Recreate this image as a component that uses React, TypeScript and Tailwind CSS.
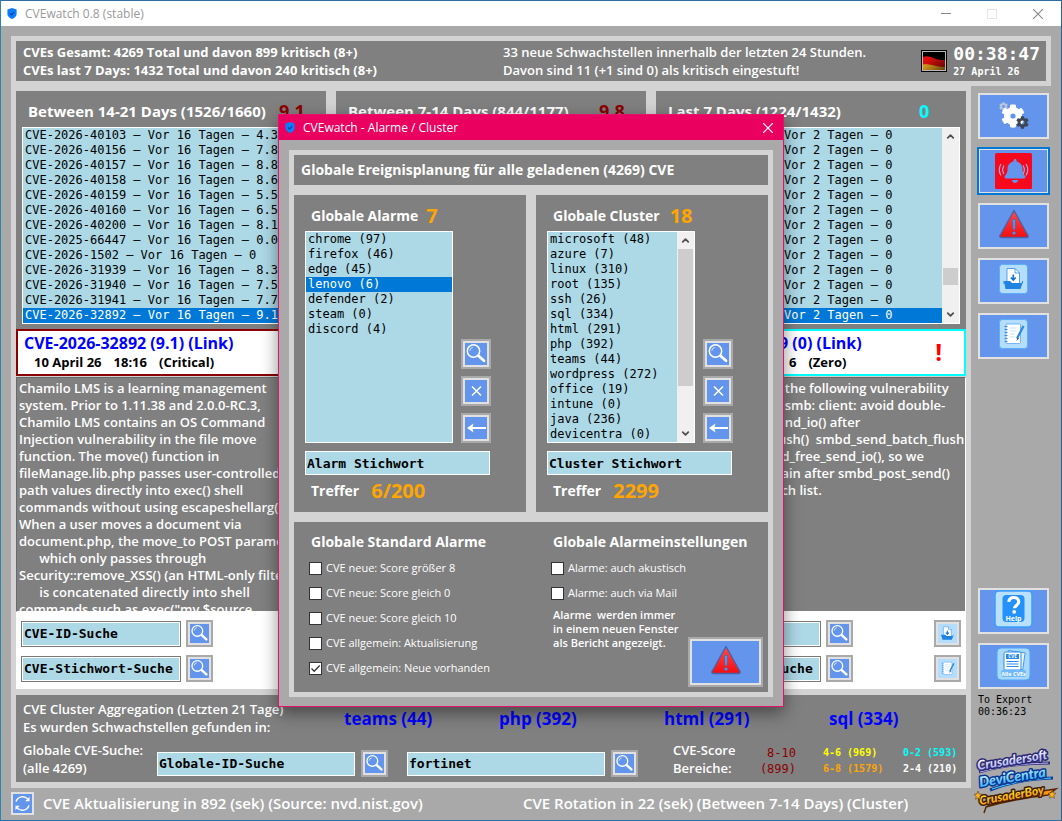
import React from "react";
import { FaBell, FaCog } from "react-icons/fa";
import { ChevronDown, ChevronUp } from "lucide-react";

const SANS = "font-['Open_Sans','Noto_Sans',sans-serif]";
const MONO = "font-['DejaVu_Sans_Mono','Liberation_Mono',monospace]";

/* ---------- icons ---------- */

function ShieldIcon() {
  return (
    <svg viewBox="0 0 10 11" className="h-[11px] w-2.5" aria-hidden="true">
      <path d="M5 0 9.6 1.4V6C9.6 8.4 7.4 10 5 11 2.6 10 .4 8.4.4 6V1.4Z" fill="#0a7cff" />
      <path d="m3 5.4 1.5 1.5L7.2 4" fill="none" stroke="#0b3c8c" strokeWidth="1.1" />
    </svg>
  );
}

function SearchIcon() {
  return (
    <svg viewBox="0 0 22 22" className="size-full" aria-hidden="true">
      <path d="m12.600 12 6.400 5.800" stroke="#fff" strokeWidth="2.800" strokeLinecap="round" />
      <circle cx="8.500" cy="8" r="6.200" fill="#6495ed" stroke="#fff" strokeWidth="1.500" />
      <path d="M4.800 7.800a3.800 3.800 0 0 1 3-3.400" stroke="#dbe7ff" strokeWidth="1" fill="none" />
    </svg>
  );
}

function CrossIcon() {
  return (
    <svg viewBox="0 0 22 22" className="size-full" aria-hidden="true">
      <path d="m7 6.5 9 9m0-9-9 9" stroke="#fff" strokeWidth="1.5" />
    </svg>
  );
}

function BackIcon() {
  return (
    <svg viewBox="0 0 22 22" className="size-full" aria-hidden="true">
      <path d="M5 11h16" stroke="#fff" strokeWidth="2" />
      <path d="M2 11 8.500 6.500 7.300 11l1.200 4.500Z" fill="#fff" />
    </svg>
  );
}

function RefreshIcon() {
  return (
    <svg viewBox="0 0 20 20" className="size-full" aria-hidden="true">
      <path d="M3.2 8A7.2 7.2 0 0 1 15.6 5.4M16.8 12A7.2 7.2 0 0 1 4.4 14.6" fill="none" stroke="#fff" strokeWidth="1.5" />
      <path d="M17.4 3v4.6h-4.6ZM2.6 17v-4.6h4.6Z" fill="#fff" />
    </svg>
  );
}

function GearsIcon() {
  return (
    <svg viewBox="0 0 30 28" className="h-7 w-[30px]" aria-hidden="true">
      <FaCog x="0" y="0" size={9} color="#b9c6d8" />
      <FaCog x="2" y="2" size={24} color="#ffffff" />
      <circle cx="14" cy="14" r="4.600" fill="#ffffff" />
      <circle cx="14" cy="14" r="2.6" fill="#6495ed" />
      <FaCog x="17" y="14" size={13} color="#3c4654" />
    </svg>
  );
}

function BellIcon() {
  return (
    <svg viewBox="0 0 37 36" className="h-9 w-[37px]" aria-hidden="true">
      <rect width="37" height="36" rx="1.5" fill="#f8081c" />
      <FaBell x="8" y="6" size={24} color="#6495ed" />
      <path d="M9 12.5a8 8 0 0 0 0 8.500M6 11a11 11 0 0 0 0 11.500M28 12.500a8 8 0 0 1 0 8.500M31 11a11 11 0 0 1 0 11.500" fill="none" stroke="#a3a9e0" strokeWidth="1.2" />
    </svg>
  );
}

function WarningIcon() {
  return (
    <svg viewBox="0 0 32 30" className="mb-1 h-[30px] w-8" aria-hidden="true">
      <defs>
        <linearGradient id="warn" x1="0" y1="0" x2="0" y2="1">
          <stop offset="0" stopColor="#ff4a48" />
          <stop offset="1" stopColor="#f40d12" />
        </linearGradient>
      </defs>
      <path d="M16 1.500 30 26.500Q30.500 28.500 28.500 28.500H3.500Q1.500 28.500 2 26.500Z" fill="url(#warn)" stroke="#4a62a8" strokeWidth="1.4" strokeLinejoin="round" />
      <path d="M14.500 10.500h3l-.5 10h-2Z" fill="#6495ed" stroke="#4a62a8" strokeWidth=".7" />
      <circle cx="16" cy="24" r="1.600" fill="#6495ed" stroke="#4a62a8" strokeWidth=".7" />
    </svg>
  );
}

function SaveArt() {
  return (
    <>
      <path d="M8 4.500h8l4.500 4.500v11H8Z" fill="#fff" stroke="#2f8de4" strokeWidth=".8" />
      <path d="M16 4.500V9h4.500" fill="none" stroke="#2f8de4" strokeWidth=".8" />
      <path d="M14.300 10.500v5m-2.500-2 2.500 2.500 2.500-2.500" fill="none" stroke="#1673d1" strokeWidth="1.700" />
      <path d="M5 17h6l2 2h10.500l-2 6H6.500Z" fill="#1f83e2" />
      <path d="M5 17v3m18.500-3v2" stroke="#1f83e2" strokeWidth="1" />
    </>
  );
}

function NoteArt() {
  return (
    <>
      <rect x="7" y="5" width="14.500" height="19.500" rx="1" fill="#fff" stroke="#57a8ee" strokeWidth=".8" />
      <path d="M5.500 7.500h3m-3 3h3m-3 3h3m-3 3h3m-3 3h3m-3 3h3" stroke="#3a8fe0" strokeWidth="1" />
      <path d="M10.500 9h7m-7 3h7m-7 3h5m-5 3h5" stroke="#b9dcfa" strokeWidth=".8" />
      <path d="m24.500 7-6.500 12.500" stroke="#2d86de" strokeWidth="2.200" />
      <path d="m18.600 18.500-1.300 3.500 2.700-2.400" fill="#174f92" />
    </>
  );
}

function Tile({ children, framed }: { children: React.ReactNode; framed?: boolean }) {
  return (
    <svg viewBox="0 0 29 30" className={framed ? "mb-1 h-[30px] w-[29px]" : "size-full bg-[#b5ddff]"} aria-hidden="true">
      <rect x=".5" y=".5" width="28" height="29" rx={framed ? 3 : 0} fill="#b5ddff" stroke={framed ? "#5aaefc" : "#b5ddff"} />
      {children}
    </svg>
  );
}

function HelpIcon() {
  return (
    <svg viewBox="0 0 39 38" className="mb-1 h-[38px] w-[39px]" aria-hidden="true">
      <rect x="1" y="1" width="37" height="36" rx="4" fill="#b9e0ff" stroke="#3b9dfc" strokeWidth="1.500" />
      <rect x="8.500" y="5" width="22" height="27" rx="4" fill="#2592fb" />
      <path d="M14.800 11.800c.3-3 2.300-4.300 5-4.300 3 0 4.900 1.700 4.900 4.200 0 3.800-4.200 3.600-4.200 6.600" fill="none" stroke="#fff" strokeWidth="3.200" />
      <circle cx="20.200" cy="21.800" r="1.900" fill="#fff" />
      <text x="19.500" y="30.500" textAnchor="middle" fontSize="7" fontWeight="700" fill="#fff" fontFamily="Open Sans">Help</text>
    </svg>
  );
}

function AllCvesIcon() {
  return (
    <svg viewBox="0 0 35 34" className="mb-1 h-[34px] w-[35px]" aria-hidden="true">
      <rect x="1" y="1" width="33" height="32" rx="4" fill="#a9d8ff" stroke="#4aa5fa" />
      <path d="M11 4.500h17v17H11Z" fill="#e8f5ff" stroke="#2b8bea" strokeWidth=".8" transform="rotate(8 19 13)" />
      <rect x="8" y="5" width="17" height="18" rx="1.500" fill="#fff" stroke="#2b8bea" />
      <rect x="10" y="7" width="13" height="5" fill="#2b8bea" />
      <text x="16.500" y="11.300" textAnchor="middle" fontSize="4.500" fontWeight="700" fill="#fff" fontFamily="Open Sans">CVE</text>
      <path d="M10.500 14.500h12m-12 2.500h12m-12 2.500h12" stroke="#2b8bea" strokeWidth="1.100" />
      <rect x="5" y="23" width="25" height="7" rx="2" fill="#6fb9f6" />
      <text x="17.500" y="28.800" textAnchor="middle" fontSize="5.500" fontWeight="700" fill="#fff" fontFamily="Open Sans">Alle CVEs</text>
    </svg>
  );
}

function FlagIcon() {
  return (
    <svg viewBox="0 0 26 22" className="h-[22px] w-[26px]" aria-label="Deutsch">
      <defs>
        <linearGradient id="shade" x1="0" y1="0" x2="1" y2="1">
          <stop offset=".3" stopColor="#000" stopOpacity="0" />
          <stop offset="1" stopColor="#000" stopOpacity=".6" />
        </linearGradient>
      </defs>
      <rect width="26" height="22" fill="#000" />
      <rect x="1.500" y="1.500" width="23" height="19" fill="#000" stroke="#b9b9b9" />
      <path d="M2 7C9 4 14 11 24 10v8C16 19 10 14 2 15Z" fill="#e00d0d" />
      <path d="M2 14.500c8-1 13 3 22 2.500v3H2Z" fill="#eba81c" />
      <rect x="2" y="2" width="22" height="18" fill="url(#shade)" />
    </svg>
  );
}

function BrandLogo() {
  return (
    <svg viewBox="0 0 84 66" className="h-[66px] w-[84px] overflow-visible" role="img" aria-label="Crusadersoft DeviCentra CrusaderBoy">
      <defs>
        <linearGradient id="l1" x1="0" y1="0" x2="0" y2="1">
          <stop offset=".2" stopColor="#ffffff" />
          <stop offset="1" stopColor="#8f9be8" />
        </linearGradient>
        <linearGradient id="l2" x1="0" y1="0" x2="0" y2="1">
          <stop offset=".2" stopColor="#c9f6ff" />
          <stop offset="1" stopColor="#1ba5f2" />
        </linearGradient>
        <linearGradient id="l3" x1="0" y1="0" x2="0" y2="1">
          <stop offset=".2" stopColor="#ffe53a" />
          <stop offset="1" stopColor="#f58a07" />
        </linearGradient>
      </defs>
      <path d="M5 25Q34 16 76 16" stroke="#37307e" strokeWidth="3" fill="none" />
      <path d="M6 25Q34 17 74 16" stroke="#b8b4f0" strokeWidth="1" fill="none" />
      <path d="M16 43Q44 32 79 31" stroke="#0b3c9c" strokeWidth="3" fill="none" />
      <path d="M18 42Q44 33 77 31" stroke="#4cd0ff" strokeWidth="1" fill="none" />
      <path d="M12 60Q38 48 82 42l-8 6Q40 52 12 60l-2 6" stroke="#5a2500" strokeWidth="1.500" fill="#f79a0d" />
      <g fontFamily="Lato" fontStyle="italic" fontWeight="900" paintOrder="stroke" strokeLinejoin="round">
        <text x="4" y="23" fontSize="13" fill="url(#l1)" stroke="#2b2672" strokeWidth="3" transform="rotate(-9 4 23)">Crusadersoft</text>
        <text x="6" y="40" fontSize="14" fill="url(#l2)" stroke="#0a3594" strokeWidth="3" transform="rotate(-9 6 40)">DeviCentra</text>
        <text x="6" y="58" fontSize="12" fill="url(#l3)" stroke="#3f1c04" strokeWidth="3" transform="rotate(-10 6 58)">CrusaderBoy</text>
      </g>
      <path d="m4 44 1 3 3 .3-2.300 2 .8 3L4 50.700l-2.500 1.600.8-3-2.300-2 3-.3ZM78 43l1 3 3 .3-2.300 2 .8 3-2.500-1.600-2.500 1.600.8-3-2.300-2 3-.3Z" fill="#ffb51c" stroke="#5a2d00" strokeWidth=".5" />
    </svg>
  );
}

/* ---------- controls ---------- */

function SquareButton({ label, large, children }: { label: string; large?: boolean; children: React.ReactNode }) {
  return (
    <button
      type="button"
      aria-label={label}
      className={`shrink-0 border-2 border-[#a9a9a9] bg-[#e1e1e1] p-0.5 ${large ? "size-[30px]" : "size-[27px]"}`}
    >
      <span className="block size-full bg-[#6495ed]">{children}</span>
    </button>
  );
}

function SideButton({ label, active, children }: { label: string; active?: boolean; children: React.ReactNode }) {
  return (
    <button
      type="button"
      aria-label={label}
      className={`flex h-[46px] w-full items-center justify-center border-2 border-[#e1e1e1] bg-[#6495ed] ${active ? "outline-2 -outline-offset-1 outline-[#0078d7]" : ""}`}
    >
      {children}
    </button>
  );
}

function TextField({ label, value, className = "" }: { label: string; value: string; className?: string }) {
  return (
    <input
      type="text"
      aria-label={label}
      defaultValue={value}
      className={`h-6 min-w-0 border border-white bg-[#add8e6] px-px text-[13px] font-bold text-black outline-none ${MONO} ${className}`}
    />
  );
}

function ScrollBar({ thumb }: { thumb: string }) {
  return (
    <div className="flex w-[17px] shrink-0 flex-col items-center bg-[#f0f0f0] text-[#505050]">
      <span className="flex h-[17px] items-center"><ChevronUp size={11} strokeWidth={4} /></span>
      <div className="flex w-[15px] flex-1 flex-col"><div className={`bg-[#cdcdcd] ${thumb}`} /></div>
      <span className="flex h-[17px] items-center"><ChevronDown size={11} strokeWidth={4} /></span>
    </div>
  );
}

function ListBox({ label, items, selected, thumb, className = "", rowClass = "pl-0.5" }: {
  label: string; items: string[]; selected?: number; thumb?: string; className?: string; rowClass?: string;
}) {
  return (
    <div className={`flex overflow-hidden border border-white bg-[#add8e6] ${className}`}>
      <ul role="listbox" aria-label={label} className={`min-w-0 flex-1 overflow-hidden whitespace-pre text-xs leading-[15px] ${MONO}`}>
        {items.map((item, i) => (
          <li key={i} role="option" aria-selected={i === selected} className={`${rowClass} ${i === selected ? "bg-[#0078d7] text-white" : "text-black"}`}>
            {item}
          </li>
        ))}
      </ul>
      {thumb && <ScrollBar thumb={thumb} />}
    </div>
  );
}

function Check({ label, checked }: { label: string; checked?: boolean }) {
  return (
    <label className="flex h-[25px] items-center gap-1 text-[11px] text-white">
      <span className="grid size-[13px]">
        <input type="checkbox" defaultChecked={checked} className="peer col-start-1 row-start-1 size-[13px] appearance-none border border-[#333] bg-white" />
        <svg viewBox="0 0 13 13" className="pointer-events-none invisible col-start-1 row-start-1 size-[13px] peer-checked:visible" aria-hidden="true">
          <path d="m2.500 6.500 2.700 2.800L10.700 3.500" fill="none" stroke="#333" strokeWidth="1.300" />
        </svg>
      </span>
      {label}
    </label>
  );
}

/* ---------- main window ---------- */

const WEEK3 = [
  "CVE-2026-40103 – Vor 16 Tagen – 4.3",
  "CVE-2026-40156 – Vor 16 Tagen – 7.8",
  "CVE-2026-40157 – Vor 16 Tagen – 8.8",
  "CVE-2026-40158 – Vor 16 Tagen – 8.6",
  "CVE-2026-40159 – Vor 16 Tagen – 5.5",
  "CVE-2026-40160 – Vor 16 Tagen – 6.5",
  "CVE-2026-40200 – Vor 16 Tagen – 8.1",
  "CVE-2025-66447 – Vor 16 Tagen – 0.0",
  "CVE-2026-1502 – Vor 16 Tagen – 0",
  "CVE-2026-31939 – Vor 16 Tagen – 8.3",
  "CVE-2026-31940 – Vor 16 Tagen – 7.5",
  "CVE-2026-31941 – Vor 16 Tagen – 7.7",
  "CVE-2026-32892 – Vor 16 Tagen – 9.1",
];
const WEEK1 = Array.from({ length: 13 }, () => "Vor 2 Tagen – 0");

const TEXT3 = `Chamilo LMS is a learning management
system. Prior to 1.11.38 and 2.0.0-RC.3,
Chamilo LMS contains an OS Command
Injection vulnerability in the file move
function. The move() function in
fileManage.lib.php passes user-controlled
path values directly into exec() shell
commands without using escapeshellarg().
When a user moves a document via
document.php, the move_to POST parameter
      which only passes through
Security::remove_XSS() (an HTML-only filter)
      is concatenated directly into shell
commands such as exec("mv $source`;

const TEXT1 = `  the following vulnerability
  smb: client: avoid double-
  nd_io() after
ush()  smbd_send_batch_flush
 d_free_send_io(), so we
 ain after smbd_post_send()
 ch list.`;

interface ColumnProps {
  title: string;
  score: string;
  scoreClass: string;
  items: string[];
  selected?: number;
  thumb?: string;
  rowClass?: string;
  frame: string;
  link?: string;
  date?: string[];
  alert?: boolean;
  indent?: string;
  text?: string;
}

function Column(p: ColumnProps) {
  return (
    <section className="flex min-w-0 flex-col">
      <div className="bg-[#808080] px-1.5 pb-[5px]">
        <div className="flex h-9 items-center pt-1 pl-1.5">
          <h2 className="w-[251px] text-[15px] font-bold whitespace-nowrap text-white">{p.title}</h2>
          <span className={`text-lg font-bold ${p.scoreClass}`}>{p.score}</span>
        </div>
        <ListBox label={p.title} items={p.items} selected={p.selected} thumb={p.thumb} rowClass={p.rowClass} className="h-[197px]" />
      </div>
      <div className={`flex h-[47px] items-center border-2 bg-white pr-[22px] pb-0.5 ${p.frame}`}>
        <div className={`flex-1 font-bold whitespace-pre ${p.indent ?? "pl-1.5"}`}>
          <a href="#cve" className="block text-base leading-5 text-[#0000ff]">{p.link}</a>
          <p className="flex gap-3 pl-2.5 text-[13px] leading-[18px] text-black">
            {p.date?.map((part) => <span key={part}>{part}</span>)}
          </p>
        </div>
        {p.alert && <span className="text-2xl font-bold text-[#ff0000]">!</span>}
      </div>
      <div className={`mt-px h-[235px] overflow-hidden border border-t-[#696969] border-r-white border-b-white border-l-[#696969] bg-[#808080] pt-0.5 text-[13px] leading-[17px] font-semibold whitespace-pre text-white ${p.indent ?? "pl-0.5"}`}>
        {p.text}
      </div>
      <div className="flex flex-col gap-2 bg-white px-[5px] pt-2 pb-[7px]">
        <SearchRow label="CVE-ID-Suche" action="Speichern"><Tile><SaveArt /></Tile></SearchRow>
        <SearchRow label="CVE-Stichwort-Suche" action="Notiz"><Tile><NoteArt /></Tile></SearchRow>
      </div>
    </section>
  );
}

function SearchRow({ label, action, children }: { label: string; action: string; children: React.ReactNode }) {
  return (
    <div className="flex items-center gap-[5px]">
      <div className="flex w-40 border border-[#7a7a7a]"><TextField label={label} value={label} className="w-full" /></div>
      <SquareButton label={`${label} starten`}><SearchIcon /></SquareButton>
      <span className="flex-1" />
      <SquareButton label={action}>{children}</SquareButton>
    </div>
  );
}

function Header() {
  return (
    <header className="mr-2.5 flex h-[50px] items-center border-5 border-[#d3d3d3] bg-[#808080] pr-1.5 pl-[7px] text-[13px] leading-[18px] whitespace-nowrap text-white">
      <div className="w-[480px] font-bold">
        <p>CVEs Gesamt: 4269 Total und davon 899 kritisch (8+)</p>
        <p>CVEs last 7 Days: 1432 Total und davon 240 kritisch (8+)</p>
      </div>
      <div className="flex-1 font-semibold">
        <p>33 neue Schwachstellen innerhalb der letzten 24 Stunden.</p>
        <p>Davon sind 11 (+1 sind 0) als kritisch eingestuft!</p>
      </div>
      <FlagIcon />
      <div className={`pt-0.5 pl-1.5 font-bold ${MONO}`}>
        <p className="text-lg leading-5">00:38:47</p>
        <p className="text-[10px] leading-4">27 April 26</p>
      </div>
    </header>
  );
}

function ClusterPanel() {
  return (
    <section className="mt-1.5 flex h-[87px] flex-col bg-[#808080] pt-[5px] pl-[7px] text-[13px] leading-[18px] font-semibold whitespace-nowrap text-white">
      <div className="flex h-[41px]">
        <div className="w-[321px]">
          <p>CVE Cluster Aggregation (Letzten 21 Tage)</p>
          <p>Es wurden Schwachstellen gefunden in:</p>
        </div>
        <nav className="flex pt-2.5 text-[17px] font-bold">
          <a href="#teams" className="w-[155px] text-[#0000ff]">teams (44)</a>
          <a href="#php" className="w-[165px] text-[#0000ff]">php (392)</a>
          <a href="#html" className="w-[165px] text-[#0000ff]">html (291)</a>
          <a href="#sql" className="text-[#0000ff]">sql (334)</a>
        </nav>
      </div>
      <div className="flex items-start">
        <p className="w-[134px]">Globale CVE-Suche:<br />(alle 4269)</p>
        <div className="flex items-center gap-1.5 pt-[9px]">
          <TextField label="Globale-ID-Suche" value="Globale-ID-Suche" className="w-[198px]" />
          <SquareButton label="ID suchen"><SearchIcon /></SquareButton>
          <TextField label="Globale Stichwort-Suche" value="fortinet" className="ml-[13px] w-[198px]" />
          <SquareButton label="Stichwort suchen"><SearchIcon /></SquareButton>
        </div>
        <p className="ml-[35px] w-[86px]">CVE-Score<br />Bereiche:</p>
        <div className={`flex pt-1 leading-4 font-bold ${MONO}`}>
          <p className="w-[37px] text-right text-xs leading-4 font-normal text-[#8b0000]">8-10<br />(899)</p>
          <p className="ml-[27px] w-20 text-[10px] leading-4 text-[#ffff00]">4-6 (969)<br /><span className="text-[#ffa500]">6-8 (1579)</span></p>
          <p className="text-[10px] leading-4 text-[#00ffff]">0-2 (593)<br /><span className="text-white">2-4 (210)</span></p>
        </div>
      </div>
    </section>
  );
}

function Sidebar() {
  return (
    <aside className="flex w-[90px] flex-col gap-[9px] pt-[7px] pr-3 pl-[7px]">
      <SideButton label="Einstellungen"><GearsIcon /></SideButton>
      <SideButton label="Alarme" active><BellIcon /></SideButton>
      <SideButton label="Warnungen"><WarningIcon /></SideButton>
      <SideButton label="Export"><Tile framed><SaveArt /></Tile></SideButton>
      <SideButton label="Notizen"><Tile framed><NoteArt /></Tile></SideButton>
      <div className="h-[211px]" />
      <SideButton label="Hilfe"><HelpIcon /></SideButton>
      <SideButton label="Alle CVEs"><AllCvesIcon /></SideButton>
      <p className={`-mt-1 text-[10px] leading-3 whitespace-nowrap text-black ${MONO}`}>To Export<br />00:36:23</p>
      <div className="-mx-1 mt-5 -mb-8"><BrandLogo /></div>
    </aside>
  );
}

/* ---------- dialog ---------- */

const ALARMS = ["chrome (97)", "firefox (46)", "edge (45)", "lenovo (6)", "defender (2)", "steam (0)", "discord (4)"];
const CLUSTERS = [
  "microsoft (48)", "azure (7)", "linux (310)", "root (135)", "ssh (26)", "sql (334)", "html (291)",
  "php (392)", "teams (44)", "wordpress (272)", "office (19)", "intune (0)", "java (236)", "devicentra (0)",
];

function KeywordPanel({ title, count, items, selected, thumb, field, hits, gap }: {
  title: string; count: string; items: string[]; selected?: number; thumb?: string; field: string; hits: string; gap: string;
}) {
  return (
    <section className="h-[317px] bg-[#808080] px-[11px] pt-1.5 text-white">
      <div className={`flex h-[30px] items-center pl-1.5 ${gap}`}>
        <h3 className="text-sm font-bold">{title}</h3>
        <span className="text-xl font-bold text-[#ffa500]">{count}</span>
      </div>
      <div className="flex items-end gap-2">
        <ListBox label={title} items={items} selected={selected} thumb={thumb} className="h-[212px] w-[148px]" />
        <div className="flex flex-col gap-[7px]">
          <SquareButton large label={`${title} suchen`}><SearchIcon /></SquareButton>
          <SquareButton large label={`${title} löschen`}><CrossIcon /></SquareButton>
          <SquareButton large label={`${title} hinzufügen`}><BackIcon /></SquareButton>
        </div>
      </div>
      <TextField label={field} value={field} className="mt-2 w-[185px]" />
      <div className="flex items-center gap-3 pt-0.5 pl-1.5">
        <span className="text-sm font-bold">Treffer</span>
        <span className="text-xl font-bold text-[#ffa500]">{hits}</span>
      </div>
    </section>
  );
}

function AlarmDialog() {
  return (
    <div role="dialog" aria-label="CVEwatch - Alarme / Cluster" className="absolute top-[113px] left-[277px] w-[506px] border border-[#e8106a] bg-[#a9a9a9] shadow-[0_6px_16px_rgba(0,0,0,0.45)]">
      <div className="flex h-[25px] items-center bg-[#ea005e] px-1.5 text-xs text-white">
        <ShieldIcon />
        <span className="flex-1 pl-2">CVEwatch - Alarme / Cluster</span>
        <button type="button" aria-label="Dialog schließen" className="mr-1">
          <svg viewBox="0 0 10 10" className="size-2.5"><path d="m0 0 10 10M10 0 0 10" stroke="#fff" strokeWidth="1.200" /></svg>
        </button>
      </div>
      <div className="m-2.5 mb-[9px] flex flex-col gap-2.5 border-5 border-[#d3d3d3] bg-[#d3d3d3]">
        <h2 className="flex h-[30px] items-center bg-[#808080] pl-[7px] text-sm font-bold text-white">
          Globale Ereignisplanung für alle geladenen (4269) CVE
        </h2>
        <div className="grid grid-cols-2 gap-2.5">
          <KeywordPanel title="Globale Alarme" count="7" items={ALARMS} selected={3} field="Alarm Stichwort" hits="6/200" gap="gap-2" />
          <KeywordPanel title="Globale Cluster" count="18" items={CLUSTERS} thumb="h-[137px]" field="Cluster Stichwort" hits="2299" gap="gap-2.5" />
        </div>
        <section className="grid h-[170px] grid-cols-2 bg-[#808080] pt-2.5 text-white">
          <div className="pl-[15px]">
            <h3 className="pl-0.5 text-sm font-bold">Globale Standard Alarme</h3>
            <div className="pt-1">
              <Check label="CVE neue: Score größer 8" />
              <Check label="CVE neue: Score gleich 0" />
              <Check label="CVE neue: Score gleich 10" />
              <Check label="CVE allgemein: Aktualisierung" />
              <Check label="CVE allgemein: Neue vorhanden" checked />
            </div>
          </div>
          <div className="flex flex-col pl-5">
            <h3 className="pl-0.5 text-sm font-bold">Globale Alarmeinstellungen</h3>
            <div className="pt-1">
              <Check label="Alarme: auch akustisch" />
              <Check label="Alarme: auch via Mail" />
            </div>
            <div className="flex justify-between pr-[5px] pl-0.5">
              <p className="pt-0.5 text-[11px] leading-[14px] font-semibold whitespace-pre">{"Alarme  werden immer\nin einem neuen Fenster\nals Bericht angezeigt."}</p>
              <button type="button" aria-label="Alarmbericht öffnen" className="mt-[31px] h-[50px] w-[75px] shrink-0 border-2 border-[#a9a9a9] bg-[#e1e1e1] p-0.5">
                <span className="flex size-full items-center justify-center bg-[#6495ed]"><WarningIcon /></span>
              </button>
            </div>
          </div>
        </section>
      </div>
    </div>
  );
}

export default function App() {
  return (
    <div className={`relative flex min-h-screen flex-col border border-t-[#2f6ca3] border-r-[#2f5f95] border-b-[#2f6f9f] border-l-[#2a86ae] bg-[#a9a9a9] ${SANS}`}>
      <div className="flex h-[25px] items-center bg-white px-1.5 text-xs text-[#999]">
        <ShieldIcon />
        <span className="flex-1 pl-2">CVEwatch 0.8 (stable)</span>
        <div className="flex items-center gap-9 pr-3">
          <button type="button" aria-label="Minimieren" className="h-px w-2.5 bg-[#888]" />
          <button type="button" aria-label="Maximieren" className="size-2.5 border border-[#e3e3e3]" />
          <button type="button" aria-label="Schließen">
            <svg viewBox="0 0 10 10" className="size-2.5"><path d="m0 0 10 10M10 0 0 10" stroke="#888" strokeWidth="1.100" /></svg>
          </button>
        </div>
      </div>
      <div className="pt-2.5 pl-2.5">
        <Header />
        <div className="flex">
          <main className="min-w-0 flex-1 bg-[#d3d3d3] p-[5px] pb-1.5">
            <div className="grid grid-cols-3 gap-2.5">
              <Column title="Between 14-21 Days (1526/1660)" score="9.1" scoreClass="text-[#8b0000]" items={WEEK3} selected={12} frame="border-[#8b0000]"
                link="CVE-2026-32892 (9.1) (Link)" date={["10 April 26", "18:16", "(Critical)"]} text={TEXT3} />
              <Column title="Between 7-14 Days (844/1177)" score="9.8" scoreClass="text-[#8b0000]" items={[]} frame="border-[#8b0000]" />
              <Column title="Last 7 Days (1224/1432)" score="0" scoreClass="text-[#00ffff]" items={WEEK1} selected={12} thumb="mt-[123px] h-[17px]" rowClass="pl-[121px]" frame="border-[#00ffff]"
                link="9 (0) (Link)" date={["6", "(Zero)"]} alert indent="pl-[121px]" text={TEXT1} />
            </div>
            <ClusterPanel />
          </main>
          <Sidebar />
        </div>
      </div>
      <footer className="flex h-8 items-center pb-0.5 pl-2.5 text-[15px] font-semibold whitespace-nowrap text-white">
        <button type="button" aria-label="Aktualisieren" className="size-[23px] shrink-0 border-2 border-[#e1e1e1] bg-[#6495ed]"><RefreshIcon /></button>
        <p className="w-[489px] pl-[9px]">CVE Aktualisierung in 892 (sek) (Source: nvd.nist.gov)</p>
        <p>CVE Rotation in 22 (sek) (Between 7-14 Days) (Cluster)</p>
      </footer>
      <AlarmDialog />
    </div>
  );
}
